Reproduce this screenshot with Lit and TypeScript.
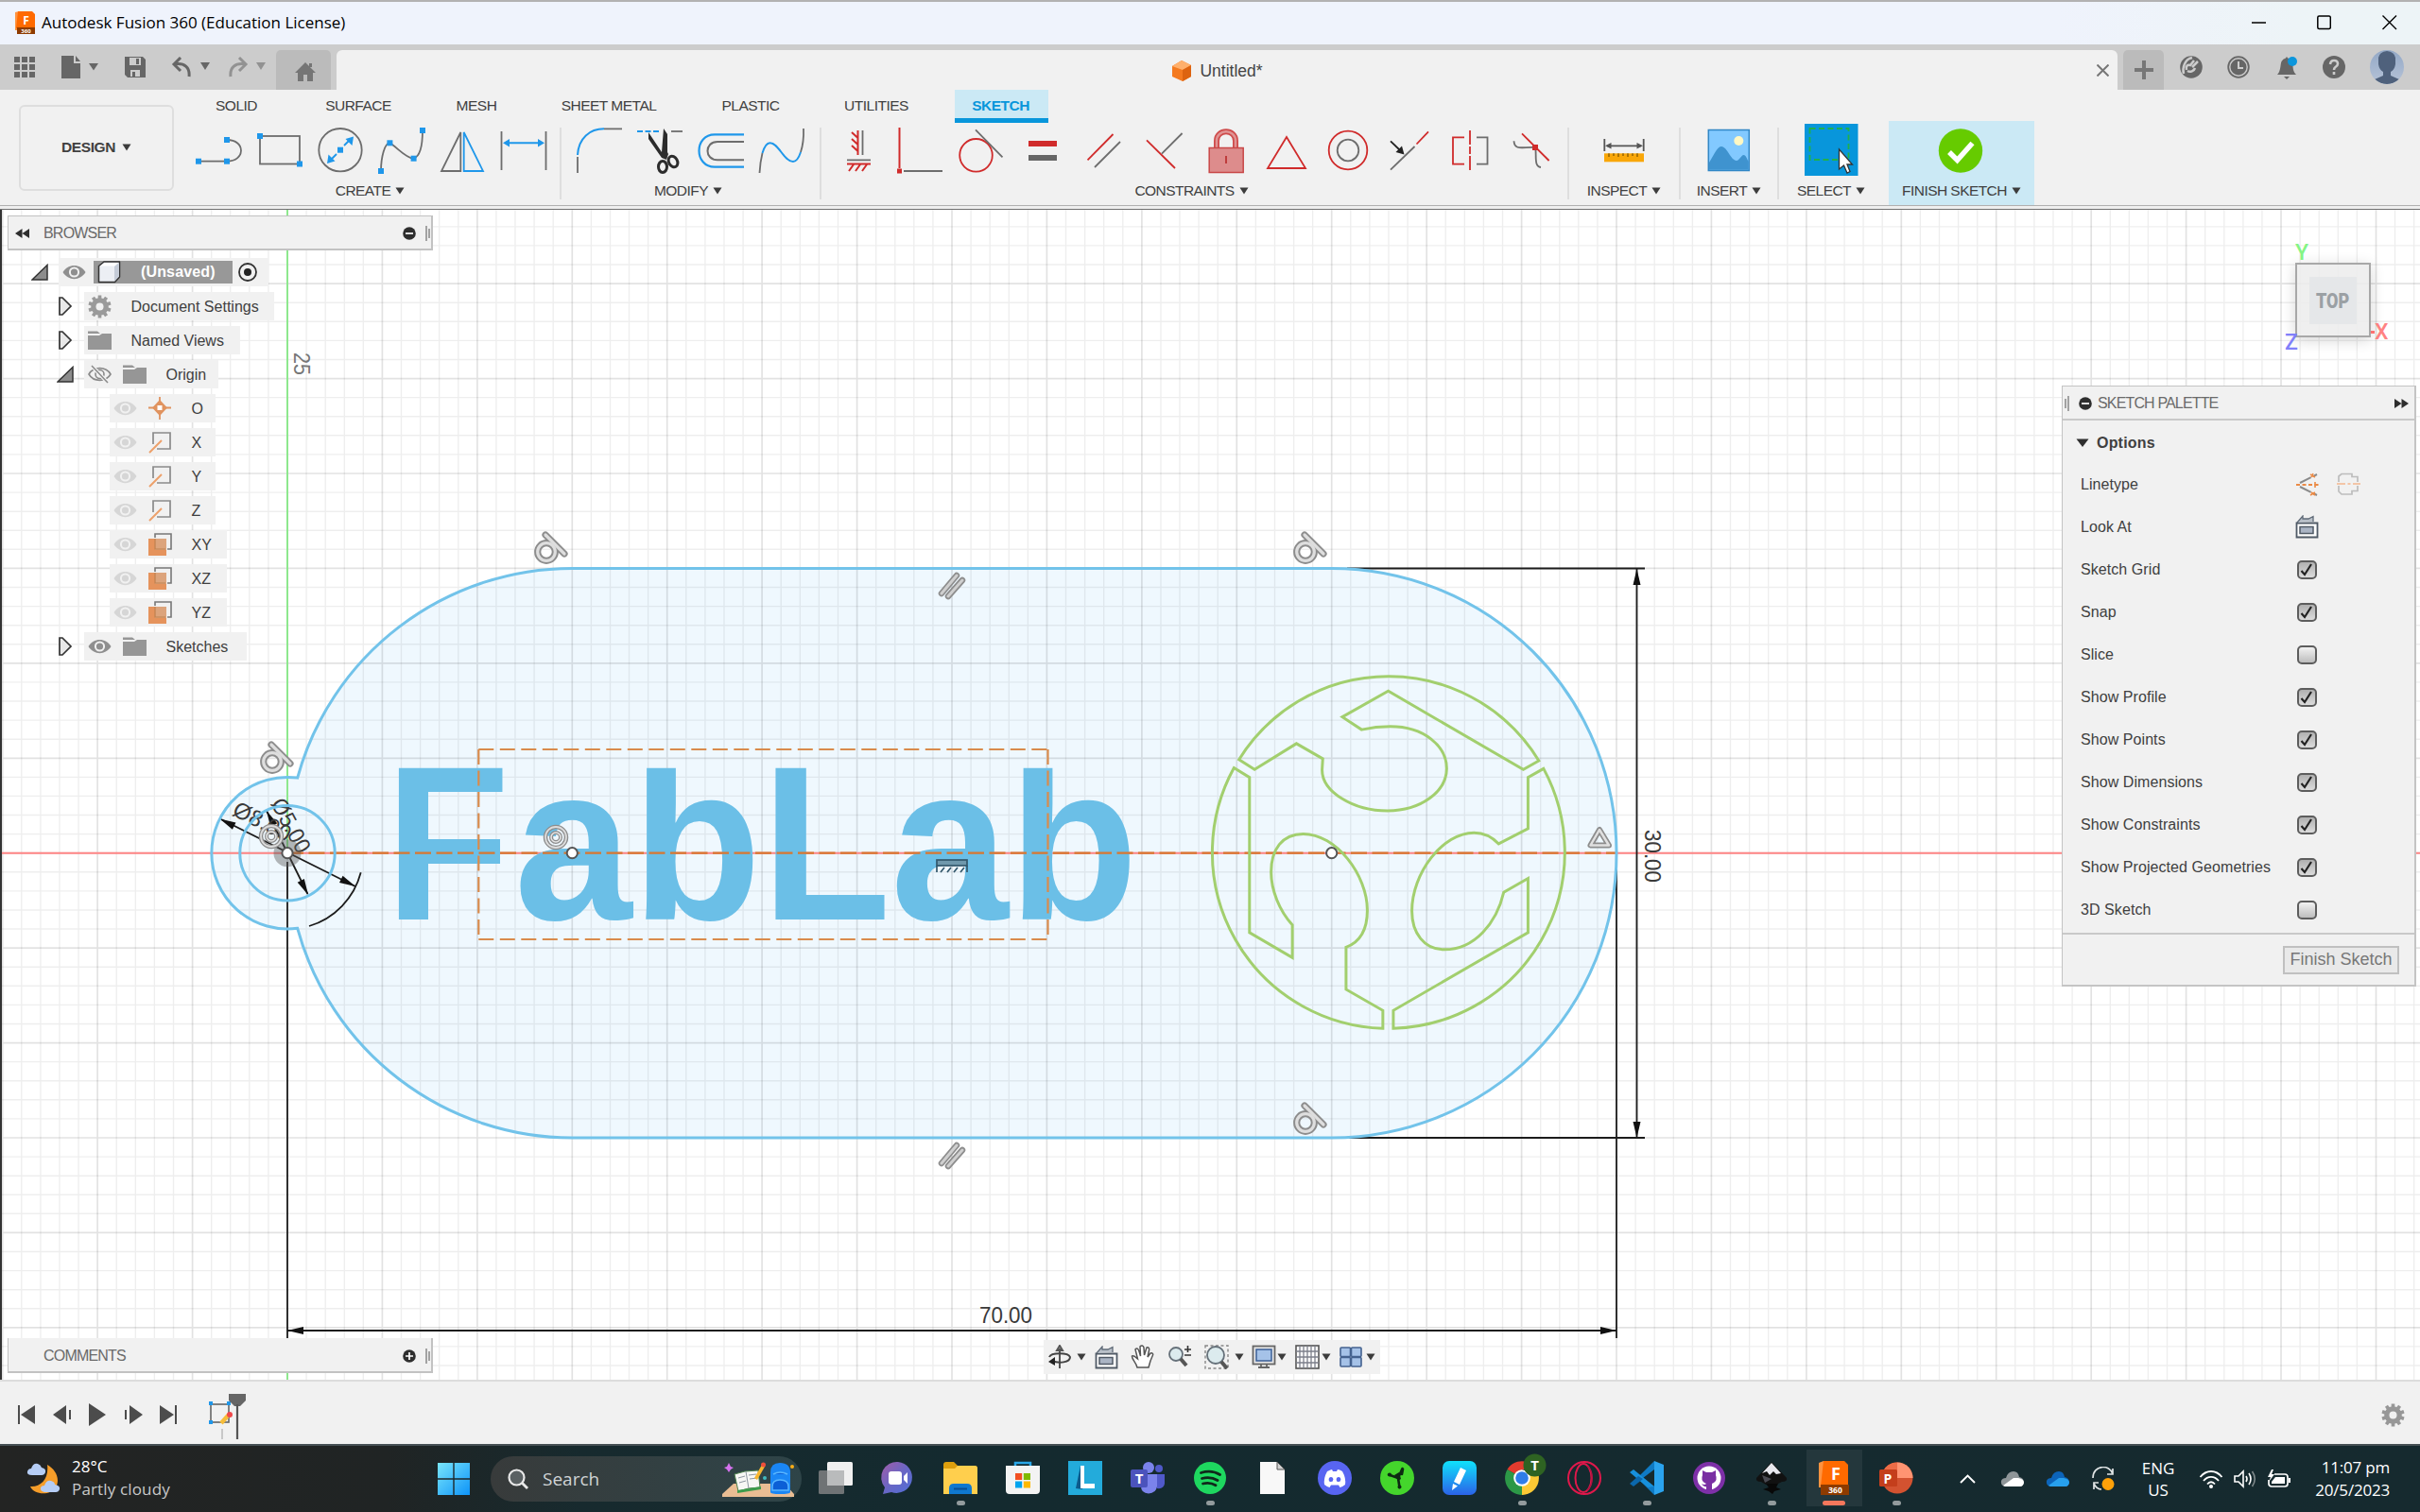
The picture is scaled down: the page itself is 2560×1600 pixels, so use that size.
import { LitElement, html, svg, css } from "lit";
import { customElement } from "lit/decorators.js";

/* ---------- helpers ---------- */

const RED = "#d02b2b";
const BLUE = "#1f97ea";
const GREY = "#6d6d6d";

const icon = (w: number, h: number, body: unknown, cls = "") =>
  html`<svg class="ic ${cls}" width=${w} height=${h} viewBox="0 0 ${w} ${h}" fill="none">${body}</svg>`;

/* tool icons share a 64x56 frame whose origin is the centre */
const tool = (body: unknown) =>
  html`<svg class="tool" width="64" height="56" viewBox="-32 -28 64 56" fill="none" stroke-width="1.8">${body}</svg>`;

const sq = (x: number, y: number, c = BLUE, s = 6) =>
  svg`<rect x=${x - s / 2} y=${y - s / 2} width=${s} height=${s} fill=${c} stroke="none"/>`;

const caret = (c = "#3c3c3c") => icon(10, 8, svg`<path d="M0.5 0.5H9.5L5 7.5Z" fill=${c}/>`);

const gearPath = (r: number) => {
  const out: string[] = [];
  const n = 10;
  for (let i = 0; i < n; i++) {
    const a = (i / n) * Math.PI * 2 - Math.PI / 2;
    const p = (rad: number, off: number) =>
      `${(Math.cos(a + off) * rad).toFixed(2)} ${(Math.sin(a + off) * rad).toFixed(2)}`;
    out.push(`${i ? "L" : "M"}${p(r * 0.76, -0.2)}L${p(r, -0.15)}L${p(r, 0.15)}L${p(r * 0.76, 0.2)}`);
  }
  return out.join("") + "Z";
};

const gear = (c: string) =>
  html`<svg class="ic" width="25" height="25" viewBox="-12.5 -12.5 25 25">
    <path d=${gearPath(12.2)} fill=${c} /><circle r="4" fill="#f1f1f1" />
  </svg>`;

/* ---------- ribbon tools ---------- */

const createTools = [
  svg`<g stroke=${GREY}><path d="M-21 12.7H9C29 12.7 29 -10 9 -10"/></g>${sq(-21, 12.7)}${sq(9, 12.7)}${sq(9, -10)}`,
  svg`<rect x="-21" y="-14" width="42" height="29.5" stroke=${GREY}/>${sq(-21, -14)}${sq(21, 15.5)}`,
  svg`<circle cy="0.7" r="22.7" stroke=${GREY}/><path d="M4 -4L10 -10M-4 5L-10 11" stroke=${BLUE}/>
    <path d="M14 -13.5L12.5 -4L5.5 -11ZM-14 15L-12.5 5.5L-5.5 12.5Z" fill=${BLUE}/>${sq(0, 0.7)}`,
  svg`<path d="M-22 23C-22 8 -18 -7 -12.6 -6.7C-6 -3 5 10 12.6 9.7C21 7 22 -8 22 -20" stroke=${GREY}/>
    ${sq(-22, 23)}${sq(-12.6, -6.7)}${sq(12.6, 9.7)}${sq(22, -20)}`,
  svg`<path d="M-1.7 -18L-22 23H-1.7Z" stroke=${GREY}/><path d="M1.7 -18L22 23H1.7Z" stroke=${BLUE}/>`,
  svg`<path d="M-23.5 -19V22M23.5 -19V22" stroke=${GREY}/><path d="M-19 -6.7H19" stroke=${BLUE} stroke-width="2"/>
    <path d="M-22 -6.7L-15 -11V-2.4ZM22 -6.7L15 -11V-2.4Z" fill=${BLUE}/>`,
];

const modifyTools = [
  svg`<path d="M-23 6C-22 -12 -10 -21.7 5 -21.7" stroke=${BLUE} stroke-width="2"/><path d="M5 -21.7H24M-23 8V25" stroke=${GREY}/>`,
  svg`<path d="M-24 -19H-1" stroke=${BLUE} stroke-dasharray="6 2.5" stroke-width="2"/><path d="M12 -19H24" stroke=${GREY}/>
    <path d="M-12 -18L-12 -11L2 9L7 11L9 5L8 3L8 -16L4 -22L2 3Z" fill="#2c2c2c"/>
    <ellipse cx="3" cy="18.5" rx="4.5" ry="6" stroke="#2c2c2c" stroke-width="3"/>
    <ellipse cx="14" cy="13" rx="4.5" ry="6" stroke="#2c2c2c" stroke-width="3" transform="rotate(-30 14 13)"/>`,
  svg`<path d="M24 -15.7H-7C-29 -15.7 -29 18.7 -7 18.7H24" stroke=${BLUE} stroke-width="2.2"/>
    <path d="M24 -8H-4C-18 -8 -18 11.3 -4 11.3H24" stroke=${GREY} stroke-width="2"/>`,
  svg`<path d="M-23.5 25C-23 16 -22 10 -20.5 4M20 3C23 -6 23.3 -14 23 -22" stroke=${GREY}/>
    <path d="M-20.5 4C-18 -4 -16 -6.7 -12.6 -6.7C-3 -6.7 2 13 12 13C16 13 18 9 20 3" stroke=${BLUE} stroke-width="2"/>`,
];

const constraintTools = [
  svg`<path d="M-1.5 -20V6M-8 -18L-1.5 -12M-8 -11L-1.5 -5M-8 -4L-1.5 2M-13 15.5H12M-11 23L-6 16M-4 23L1 16M3 23L8 16" stroke=${RED} stroke-width="2"/>
    <path d="M3.5 -20V6M-13 11.3H12" stroke=${GREY}/>`,
  svg`<path d="M-22.5 -23V20" stroke=${RED} stroke-width="2"/><path d="M-18 23H23" stroke=${GREY} stroke-width="2"/>${sq(-22.5, 23, RED, 5)}`,
  svg`<circle cx="-5.5" cy="6.3" r="17.3" stroke=${RED}/><path d="M-6 -20.7L22.5 8.3" stroke=${GREY}/>`,
  svg`<rect x="-15" y="-9" width="30" height="6" fill=${RED}/><rect x="-15" y="6" width="30" height="6" fill="#666"/>`,
  svg`<path d="M9.5 -16L-17.5 11.3" stroke=${RED}/><path d="M17 -8L-10 19" stroke=${GREY}/>`,
  svg`<path d="M-19 -9.7L11 20" stroke=${RED}/><path d="M18.6 -17L-3 4.7" stroke=${GREY}/>`,
  svg`<path d="M-10 -1V-9C-10 -22 10 -22 10 -9V-1" stroke="#cf4b4b" stroke-width="6"/>
    <path d="M-10 -1V-9C-10 -22 10 -22 10 -9V-1" stroke="#e09494" stroke-width="2.5"/>
    <rect x="-17.8" y="-1.5" width="36" height="26" fill="#dd8c8c" stroke="#c94848" stroke-width="1.5"/><path d="M0 7V15" stroke="#b33"/>`,
  svg`<path d="M0 -13L-20 20H20Z" stroke=${RED}/>`,
  svg`<circle cy="1" r="20.3" stroke=${RED}/><circle cy="1" r="11.3" stroke=${GREY}/>`,
  svg`<path d="M-20 21.7L5.5 -3" stroke=${GREY}/><path d="M7.5 -5.5L20 -18.7" stroke=${RED}/>
    <path d="M-20 -8.7L-10 1" stroke="#222"/><path d="M-5.5 5.5L-8 -3.5L-14.5 3Z" fill="#222"/>`,
  svg`<path d="M-6 -12.7H-18V15.7H-6M0 -20V-5M0 -3V5M0 7V22" stroke=${RED}/><path d="M7 -12.7H18.5V15.7H7" stroke=${GREY}/>`,
  svg`<path d="M-18.5 -8.7C-18 2 -8 -3 4 -2C6 5 2 18 10 19" stroke=${GREY}/><path d="M-10 -16.7L18.6 12" stroke=${RED}/>${sq(4, -2, RED, 6)}`,
];

const inspectTool = svg`<path d="M-20.7 -11V2M20.7 -11V2M-18 -3.7H18" stroke="#555"/>
  <path d="M-20 -3.7L-13.5 -7V-0.4ZM20 -3.7L13.5 -7V-0.4Z" fill="#555"/>
  <rect x="-21" y="4.3" width="42" height="9" fill="#f9a709"/>
  <path d="M-16 4.3V8M-11 4.3V7M-6 4.3V8M-1 4.3V7M4 4.3V8M9 4.3V7M14 4.3V8" stroke="#7a5200" stroke-width="1.2"/>`;
const insertTool = svg`<rect x="-21.7" y="-20.5" width="43" height="43" fill="#82c9ff" stroke="#3187c6" stroke-width="1.5"/>
  <path d="M-21 14C-15 4 -12 -3 -8 -3C-2 -3 2 12 8 12C11 12 13 6 15.500 6C18 6 19 10 20.6 13V21.800H-21Z" fill="#3f93cf"/>
  <circle cx="10.300" cy="-9" r="5" fill="#fff8c4"/>`;
const selectTool = svg`<rect x="-28" y="-27" width="56.500" height="57" fill="#0896db"/>
  <rect x="-22.500" y="-22" width="41" height="33" stroke="#21b04b" stroke-dasharray="6 3.500"/>
  <path d="M8.500 0V21L13.500 17L17 25L20 23.500L17 16H22.500Z" fill="#fff" stroke="#333" stroke-width="1.300"/>`;
const finishTool = svg`<circle cx="-1" cy="1.500" r="23.200" fill="#66cb00"/><path d="M-13 3L-4.500 11.500L11.500 -6.500" stroke="#fff" stroke-width="5.500"/>`;

/* ---------- sketch canvas ---------- */

const OX = 304, OY = 902.7, MM = 20.086;
const mx = (v: number) => OX + v * MM;
const my = (v: number) => OY - v * MM;

const gridLines = () => {
  let minor = "", major = "";
  for (let i = -15; i <= 112; i++) {
    const s = `M${mx(i).toFixed(1)} 222V1460`;
    if (i % 5 === 0) major += s; else minor += s;
  }
  for (let i = -27; i <= 33; i++) {
    const s = `M0 ${my(i).toFixed(1)}H2560`;
    if (i % 5 === 0) major += s; else minor += s;
  }
  return svg`<path d=${minor} stroke="#000" stroke-opacity=".068" stroke-width="1.4"/>
    <path d=${major} stroke="#000" stroke-opacity=".115" stroke-width="1.7"/>`;
};

const arrow = (x: number, y: number, deg: number) =>
  svg`<path d="M0 0L-17 -4V4Z" fill="#111" transform="translate(${x} ${y}) rotate(${deg})"/>`;

const tangent = (x: number, y: number) => svg`<g transform="translate(${x} ${y})" fill="none">
  <g stroke="#8d8d8d" stroke-width="7.200" stroke-linecap="round"><circle cx="-4" cy="4" r="9.300"/><path d="M-5 -14L15 6"/></g>
  <g stroke="#dedede" stroke-width="3.200" stroke-linecap="round"><circle cx="-4" cy="4" r="9.300"/><path d="M-5 -14L15 6"/></g></g>`;

const parallelMark = (x: number, y: number) => svg`<g transform="translate(${x} ${y})" stroke-linecap="round">
  <path d="M-11 8L5 -11M-4 11L11 -6" stroke="#8d8d8d" stroke-width="6.500"/>
  <path d="M-11 8L5 -11M-4 11L11 -6" stroke="#cfcfcf" stroke-width="3"/></g>`;

const concentric = (x: number, y: number) => svg`<g transform="translate(${x} ${y})" fill="none">
  <circle r="11" stroke="#8d8d8d" stroke-width="4.500"/><circle r="11" stroke="#dcdcdc" stroke-width="1.800"/>
  <circle r="5" stroke="#8d8d8d" stroke-width="4"/><circle r="5" stroke="#e6e6e6" stroke-width="1.500"/></g>`;

const point = (x: number, y: number) => svg`<circle cx=${x} cy=${y} r="5.600" fill="#fff" stroke="#555" stroke-width="2"/>`;

const R = 15 * MM;
const outline = `M314.700 ${OY - 79.6}A${R} ${R} 0 0 1 ${mx(15)} ${my(15)}H${mx(55)}A${R} ${R} 0 0 1 ${mx(55)} ${my(-15)}H${mx(15)}A${R} ${R} 0 0 1 314.700 ${OY + 79.6}A80.300 80.300 0 1 1 314.700 ${OY - 79.6}Z`;

const drawing = () => html`<svg class="drawing" width="2560" height="1238" viewBox="0 222 2560 1238">
  <defs><clipPath id="cap"><rect x="400" y="812.700" width="820" height="200" /></clipPath></defs>
  <path d=${outline} fill="#eff8fe" />
  ${gridLines()}
  <path d="M0 ${OY}H2560" stroke="#ff8585" stroke-width="2" />
  <path d="M${OX} 222V${OY}M${OX} 1453V1460" stroke="#8ee88e" stroke-width="2" />
  <path d="M1 222V1460" stroke="#333" stroke-width="2" />
  <text class="axis" transform="translate(311 373) rotate(90)" textLength="24" lengthAdjust="spacingAndGlyphs">25</text>
  <g class="dim">
    <path d="M1425 601.500H1740M1425 1204H1740M1731.500 602V1204M${OX} 912V1416M1710 903V1416M${OX} 1408H1710" />
    <path d="M234 867L376 938M282 858L325.500 946M381.700 923.300A80.300 80.300 0 0 1 327 980" />
  </g>
  ${arrow(1731.5, 602, -90)}${arrow(1731.5, 1204, 90)}${arrow(OX, 1408, 180)}${arrow(1710, 1408, 0)}
  ${arrow(232.5, 866.5, 206.6)}${arrow(376, 938, 26.6)}${arrow(282, 858, 243)}${arrow(326, 947, 63)}
  <text class="dimtext" transform="translate(1740 878) rotate(90)" textLength="56" lengthAdjust="spacingAndGlyphs">30.00</text>
  <text class="dimtext" x="1036" y="1400" textLength="56" lengthAdjust="spacingAndGlyphs">70.00</text>
  <text class="dimtext" transform="translate(244.500 862) rotate(26.600)">Ø8.00</text>
  <text class="dimtext" transform="translate(286 850) rotate(62)" textLength="62" lengthAdjust="spacingAndGlyphs">Ø5.00</text>
  <g clip-path="url(#cap)">
    <text class="fab" transform="translate(407.500 973.300) scale(.925 1)">F</text>
    <text class="fab" transform="translate(544 973.300) scale(.96 1)">abLab</text>
  </g>
  <g fill="none" stroke="#d98b4c" stroke-width="2.200">
    <path d="M506.300 793H1108.500M506.300 994H1108.500M506.300 793V994M1108.500 793V994" stroke-dasharray="16 6.500" />
    <path d="M${OX} ${OY}H1710" stroke="#d87730" stroke-dasharray="17 5.500" />
  </g>
  <g fill="none" stroke="#72c3ea" stroke-width="3">
    <path d=${outline} /><circle cx=${OX} cy=${OY} r="50.200" />
  </g>
  <g fill="none" stroke="#a2cf6e" stroke-width="3">
    <g transform="translate(1260 560) scale(.357143 .420875)">
      <path vector-effect="non-scaling-stroke" d="M142 579A521.500 442.500 0 0 1 1030 582L984 604L584 407L448 472L505 504C532 499 560 496 590 496C690 496 757 545 757 602C757 660 680 708 582 708C480 708 388 660 388 605L390 577L312 539L188 604Z" />
      <path vector-effect="non-scaling-stroke" d="M127 600L173 624V1014L300 1077V995C262 960 237 908 237 862C237 805 270 766 332 766C430 766 522 870 522 958C522 1005 500 1038 459 1051V1157L568 1210V1255A521.500 442.500 0 0 1 127 600Z" />
      <path vector-effect="non-scaling-stroke" d="M1044 602A521.500 442.500 0 0 1 599 1255V1210L998 1014V878L926 913C905 990 840 1057 750 1057C690 1057 654 1015 654 960C654 865 745 763 838 763C865 763 890 772 911 791L998 753V624Z" />
    </g>
  </g>
  <circle cx=${OX} cy=${OY} r="14.500" fill="#555" fill-opacity=".42" />
  ${concentric(287, 885)}${concentric(588, 886)}
  ${tangent(582, 580)}${tangent(1385, 580)}${tangent(292, 802)}${tangent(1385, 1184)}
  ${parallelMark(1007, 620)}${parallelMark(1007, 1223)}
  <g transform="translate(1007 916)" stroke="#33586c" fill="none" stroke-width="1.700">
    <rect x="-16" y="-6" width="32" height="6" fill="#6f98ac" /><path d="M-16 0V7M16 0V7M-12 7L-8 2M-5 7L-1 2M2 7L6 2M9 7L13 2" />
  </g>
  <g fill="none" stroke-linejoin="round"><path d="M1692 878L1682.500 894.500H1702Z" stroke="#8d8d8d" stroke-width="6" /><path d="M1692 878L1682.500 894.500H1702Z" stroke="#e0e0e0" stroke-width="2.500" /></g>
  ${point(OX, OY)}${point(605.3, OY)}${point(1408.7, OY)}
</svg>`;

/* ---------- browser tree ---------- */

const eye = (c: string) => icon(25, 16, svg`<path d="M0.500 8C6 -1.500 19 -1.500 24.500 8C19 17.500 6 17.500 0.500 8Z" fill=${c}/><circle cx="12.500" cy="8" r="4.600" stroke="#f1f1f1" stroke-width="2"/>`);
const eyeOff = icon(25, 20, svg`<path d="M1 10C6 1.500 19 1.500 24 10C19 18.500 6 18.500 1 10Z" stroke="#8a8a8a" stroke-width="1.600"/><circle cx="12.500" cy="10" r="4.500" stroke="#8a8a8a" stroke-width="1.600"/><path d="M4 1L21 19" stroke="#f1f1f1" stroke-width="4"/><path d="M4 1L21 19" stroke="#8a8a8a" stroke-width="1.500"/>`);
const folder = icon(25, 20, svg`<path d="M0 0.500H10L13 3H0ZM0 5H12L15 3H25V20H0Z" fill="#969696"/>`);
const cube = icon(25, 24, svg`<path d="M1.500 5.500L7 1H23.500V17L18.500 22.500H1.500Z" fill="#eceff4" stroke="#333" stroke-width="1.500" stroke-linejoin="round"/><path d="M18 6L23 2V16.500L18 21.500Z" fill="#c5ccd8"/><path d="M3 5.500L8 2H22L18 5.500Z" fill="#fff"/>`);
const originPt = icon(25, 24, svg`<path d="M12 0V24M0 11.500H24" stroke="#e0935f" stroke-width="1.800"/><path d="M12 3L20 11.500L12 20L4 11.500Z" fill="#e0935f"/><rect x="9.500" y="9" width="5" height="5" fill="#fff"/>`);
const axisIc = icon(25, 24, svg`<path d="M5 14V2H23V19H9" stroke="#8a8a8a" stroke-width="1.700"/><path d="M1 23L14 10" stroke="#eda06a" stroke-width="2"/>`);
const planeIc = icon(25, 24, svg`<rect x="0" y="6" width="19" height="18" fill="#e5935c"/><rect x="7" y="6" width="12" height="12" fill="#dca47c"/><path d="M7 5V1H24V17H20" stroke="#777" stroke-width="1.600"/><path d="M7 6V17H18" stroke="#c0814f" stroke-width="1.200"/>`);
const openArrow = icon(18, 18, svg`<path d="M1 17H17V1.500Z" fill="#8c8c8c" stroke="#333" stroke-width="1.500"/>`);
const shutArrow = icon(17, 20, svg`<path d="M3 1H6L15 10L6 19H3Z" fill="#e8e8e8" stroke="#333" stroke-width="1.700"/>`);

type Row = { lvl: number; arrow?: unknown; icons: unknown[]; label: string; w: number };
const faint = eye("#d6d6d6"), solid = eye("#8f8f8f");
const rows: Row[] = [
  { lvl: 1, arrow: shutArrow, icons: [gear("#9a9a9a")], label: "Document Settings", w: 201 },
  { lvl: 1, arrow: shutArrow, icons: [folder], label: "Named Views", w: 165 },
  { lvl: 1, arrow: openArrow, icons: [eyeOff, folder], label: "Origin", w: 142 },
  { lvl: 2, icons: [faint, originPt], label: "O", w: 112 },
  { lvl: 2, icons: [faint, axisIc], label: "X", w: 112 },
  { lvl: 2, icons: [faint, axisIc], label: "Y", w: 112 },
  { lvl: 2, icons: [faint, axisIc], label: "Z", w: 112 },
  { lvl: 2, icons: [faint, planeIc], label: "XY", w: 124 },
  { lvl: 2, icons: [faint, planeIc], label: "XZ", w: 124 },
  { lvl: 2, icons: [faint, planeIc], label: "YZ", w: 124 },
  { lvl: 1, arrow: shutArrow, icons: [solid, folder], label: "Sketches", w: 172 },
];

const roundBtn = (plus: boolean) => icon(14, 14, svg`<circle cx="7" cy="7" r="6.800" fill="#2e2e2e"/><path d=${plus ? "M3 7H11M7 3V11" : "M3 7H11"} stroke="#fff" stroke-width="1.700"/>`);
const grip = icon(5, 16, svg`<path d="M1 0V16M4 3V13" stroke="#888" stroke-width="1.500"/>`);
const gripR = icon(5, 16, svg`<path d="M1 3V13M4 0V16" stroke="#888" stroke-width="1.500"/>`);

/* ---------- palette ---------- */

const lookAt = icon(25, 25, svg`<path d="M1.500 8.500H23.500V23.500H1.500Z" fill="#fff" stroke="#505a66" stroke-width="1.800"/><rect x="5" y="12.500" width="14" height="7" fill="#aab4c4" stroke="#505a66" stroke-width="1.500"/><path d="M2 8L8 1V4L14 4L19 1.500V7" fill="#b9c0c9" stroke="#606b78" stroke-width="1.300"/>`);
const linetype = html`<span class="pair">${icon(25, 25, svg`<path d="M5 11L23 2M5 15L23 24" stroke="#8a8a8a" stroke-width="2" stroke-dasharray="13 3"/><path d="M1 13H25" stroke="#eb8a45" stroke-width="2" stroke-dasharray="4 2.500"/><path d="M16 2L21 5M21 10V16M16 24L21 21M17 5L19 1M17 21L21 24" stroke="#eb8a45" stroke-width="1.600"/>`)}
${icon(25, 25, svg`<path d="M2 10V4L5 1.500H16V4.500H22V10M2 14V20L5 23H16V19.500H22V14" stroke="#bdbdbd" stroke-width="1.700"/><path d="M0 12H25" stroke="#f3b78f" stroke-width="1.700" stroke-dasharray="9 2.500 3 2.500"/>`)}</span>`;
const check = (on: boolean) => html`<span class="check ${on ? "on" : ""}">${on ? icon(20, 20, svg`<path d="M4.500 11L8 15L15 4" stroke="#222" stroke-width="2.200"/>`) : ""}</span>`;

const options: [string, unknown][] = [
  ["Linetype", linetype], ["Look At", lookAt], ["Sketch Grid", check(true)], ["Snap", check(true)],
  ["Slice", check(false)], ["Show Profile", check(true)], ["Show Points", check(true)],
  ["Show Dimensions", check(true)], ["Show Constraints", check(true)],
  ["Show Projected Geometries", check(true)], ["3D Sketch", check(false)],
];

/* ---------- navigation bar ---------- */

const lens = (body: unknown) => icon(26, 26, body);
/* lead: space before the item; gap: space between its icon and its caret */
const navItems: { lead: number; gap?: number; body: unknown }[] = [
  { lead: 0, gap: 5, body: lens(svg`<path d="M13 25V4M10 6L13 1L16 6Z" stroke="#555" stroke-width="2" fill="#ddd"/><path d="M2 13C4 8 22 8 24 13C24 19 12 20 5 17" stroke="#444" stroke-width="2"/><path d="M1 18L8 13V22Z" fill="#222"/>`) },
  { lead: 8.5, body: lookAt },
  { lead: 13.5, body: lens(svg`<path d="M7 24C6 19 1 15 1.500 12C4 11 6 14 7.500 15L5 5C6.500 3 8 4 9 7L10.500 12L10 2C11.500 0 13.500 1 14 3L14.500 11L17 3C19 2 20 4 19.500 6L18 13L21 9C23 8 24 10 23.500 11C21 16 20 20 19 24Z" fill="#fff" stroke="#555" stroke-width="1.500"/>`) },
  { lead: 13, body: lens(svg`<circle cx="9" cy="10" r="7" fill="#dcebee" stroke="#66717a" stroke-width="1.800"/><path d="M14 15L20 22" stroke="#555" stroke-width="4"/><path d="M18 5H25M21.500 1V8M18 11H25" stroke="#333" stroke-width="1.600"/>`) },
  { lead: 13, gap: 6, body: lens(svg`<rect x="1" y="1" width="24" height="24" stroke="#888" stroke-width="1.400" stroke-dasharray="3 2.500"/><circle cx="12" cy="11" r="9" fill="#dcebee" stroke="#66717a" stroke-width="1.800"/><path d="M18 18L24 25" stroke="#555" stroke-width="4"/>`) },
  { lead: 8, gap: 1, body: lens(svg`<rect x="1.500" y="1.500" width="23" height="19" fill="#e6e6e6" stroke="#666" stroke-width="1.800"/><rect x="5" y="5" width="16" height="12" fill="#a5c2e8" stroke="#3b5f96" stroke-width="1.500"/><path d="M10 20V24H7H19H16V20" stroke="#666" stroke-width="1.800"/>`) },
  { lead: 9, gap: 2, body: lens(svg`<rect x="1" y="1" width="24" height="24" fill="#fff" stroke="#555" stroke-width="1.600"/><path d="M1 7H25M1 13H25M1 19H25M5 1V25M9 1V25M13 1V25M17 1V25M21 1V25" stroke="#7c7f8a" stroke-width="1.300"/>`) },
  { lead: 8, gap: 3, body: lens(svg`<g fill="#a5c2e8" stroke="#44628f" stroke-width="1.600"><rect x="2" y="3" width="10.500" height="9.500" rx="1"/><rect x="13.500" y="3" width="10.500" height="9.500" rx="1"/><rect x="2" y="13.500" width="10.500" height="9.500" rx="1"/><rect x="13.500" y="13.500" width="10.500" height="9.500" rx="1"/></g>`) },
];

/* ---------- task bar ---------- */

const app = (body: unknown) => html`<svg class="ic" width="38" height="38" viewBox="0 0 38 38" fill="none">${body}</svg>`;
const apps: { body: unknown; mark?: string }[] = [
  { body: app(svg`<rect x="1" y="11" width="27" height="25" rx="1.500" fill="#6f7375"/><rect x="10" y="2" width="27" height="25" rx="1.500" fill="#f0f0f0"/><rect x="10" y="11" width="18" height="16" fill="#b9bbbc"/>`) },
  { body: app(svg`<defs><linearGradient id="vc" x1="0" y1="0" x2="1" y2="1"><stop offset="0" stop-color="#a25ca8"/><stop offset=".5" stop-color="#6a66c4"/><stop offset="1" stop-color="#4e6fd8"/></linearGradient></defs><path d="M19 2A16.500 16.500 0 1 1 12 34L3 36L5 29A16.500 16.500 0 0 1 19 2Z" fill="url(#vc)"/><rect x="9" y="12" width="14" height="14" rx="3" fill="#fff"/><path d="M25 17L29 13V25L25 21Z" fill="#fff"/>`) },
  { body: app(svg`<path d="M1 5Q1 2 4 2H12L16 6H34Q37 6 37 9V16H1Z" fill="#dd9f0d"/><path d="M1 9H13L16 6H34Q37 6 37 9V36H1Z" fill="#ffcf4d"/><path d="M7 36V30Q7 25 12 25H26Q31 25 31 30V36Z" fill="#0f78cf"/><path d="M12 30.500H26" stroke="#0a4f93" stroke-width="2"/>`), mark: "dot" },
  { body: app(svg`<path d="M11 8V3H27V8" stroke="#2aa7e8" stroke-width="2.500"/><path d="M1 6H37V32Q37 36 33 36H5Q1 36 1 32Z" fill="#f3f3f3"/><path d="M11 14H18.200V21H11Z" fill="#f25022"/><path d="M19.800 14H27V21H19.800Z" fill="#7fba00"/><path d="M11 22.500H18.200V29.500H11Z" fill="#00a4ef"/><path d="M19.800 22.500H27V29.500H19.800Z" fill="#ffb900"/>`) },
  { body: app(svg`<rect x="1" y="1" width="36" height="36" fill="#23abdb"/><path d="M9 30L14 6V26H17L16 31Z" fill="#0c5a8c"/><path d="M14 6H18V25H29V30H14Z" fill="#fff"/>`) },
  { body: app(svg`<circle cx="20" cy="8" r="6" fill="#7b83eb"/><circle cx="31" cy="9" r="4" fill="#5059c9"/><path d="M26 15H37V25Q36 31 29 30Z" fill="#5059c9"/><path d="M12 15H29V28Q28 35 20 35.500Q12 35 12 28Z" fill="#7b83eb"/><rect x="1" y="10" width="18" height="19" rx="2" fill="#4b53bc"/><text class="glyph" x="10" y="25" text-anchor="middle" font-size="15">T</text>`) },
  { body: app(svg`<circle cx="19" cy="19" r="17" fill="#1ed75f"/><path d="M9.500 13.500C16 11.500 24 12 29.500 15.500M10.500 19.500C16 18 22 18.500 27 21.500M11.500 25C16 23.800 21 24.300 25 26.700" stroke="#10281b" stroke-width="2.800" stroke-linecap="round"/>`), mark: "dot" },
  { body: app(svg`<path d="M6 2H24L32 10V36H6Z" fill="#f8f8f8"/><path d="M24 2V10H32Z" fill="#d2d2d2" stroke="#555" stroke-width="1"/>`) },
  { body: app(svg`<circle cx="19" cy="19" r="18" fill="#5865f2"/><path d="M11 12Q15 10 16 10L17 12H21L22 10Q24 10 27 12Q31 19 30 26Q27 28.500 24.500 29L23 26.500H15L13.500 29Q11 28.500 8 26Q7 19 11 12Z" fill="#fff"/><ellipse cx="15" cy="20.500" rx="2.300" ry="2.600" fill="#5865f2"/><ellipse cx="23" cy="20.500" rx="2.300" ry="2.600" fill="#5865f2"/>`) },
  { body: app(svg`<circle cx="19" cy="19" r="18" fill="#44d62c"/><path d="M20 19L24.500 9M20 19L10 15.500M20 19L21.500 29M25 9.500L24 15" stroke="#0d2a12" stroke-width="2.600" stroke-linecap="round" stroke-linejoin="round"/><path d="M16 16L21 13L23 20L20 22Z" fill="#0d2a12"/><circle cx="11" cy="15.500" r="2" fill="#0d2a12"/><circle cx="21.500" cy="28.500" r="2" fill="#0d2a12"/>`) },
  { body: app(svg`<defs><linearGradient id="pn" x1="0" y1="0" x2="0" y2="1"><stop offset="0" stop-color="#10e2fb"/><stop offset="1" stop-color="#2b62e8"/></linearGradient></defs><rect x="1" y="1" width="36" height="36" rx="7" fill="url(#pn)"/><path d="M20 8L26 11L19 26L13 23Z" fill="#fff"/><path d="M12 25L17 27.500L11 32Z" fill="#fff"/>`) },
  { body: app(svg`<path d="M19 19L3.500 10A18 18 0 0 1 34.500 10H19Z" fill="#e33b2e"/><path d="M19 19L34.500 10A18 18 0 0 1 19 37Z" fill="#fcc934"/><path d="M19 19L19 37A18 18 0 0 1 3.500 10Z" fill="#2c9847"/><circle cx="19" cy="19" r="8.800" fill="#fff"/><circle cx="19" cy="19" r="6.800" fill="#2f7de9"/><circle class="badge" cx="32.500" cy="5.500" r="12" fill="#2e6322"/><text class="glyph" x="32.500" y="11" text-anchor="middle" font-size="15" fill="#d9e8d2">T</text>`), mark: "dot" },
  { body: app(svg`<circle cx="19" cy="19" r="17" stroke="#e0184b" stroke-width="2"/><ellipse cx="18" cy="19" rx="8.500" ry="15" stroke="#e0184b" stroke-width="2"/><path d="M22 6C29 12 29 26 22 32" stroke="#b01340" stroke-width="1.500"/>`) },
  { body: app(svg`<path d="M27 1L37 5V33L27 37Z" fill="#2aa3ee"/><path d="M27 1L9 19L27 37V28L15 19L27 10Z" fill="#0f7ac4"/><path d="M5 10L1 13L20 29L27 28Z" fill="#1790dc"/><path d="M5 28L1 25L10 17L15 20Z" fill="#0b67ab"/>`), mark: "dot" },
  { body: app(svg`<circle cx="19" cy="19" r="17" fill="#7e30a8"/><circle cx="19" cy="19" r="12.500" fill="#fff"/><path d="M12 11L16 13H22L26 11V16Q28 21 24 24L22 25V32H16V28Q13 29 11 25Q14 27 16 25L14 24Q10 21 12 16Z" fill="#7a2fa3"/>`) },
  { body: app(svg`<path d="M19 2L35 19Q36 23 30 23L24 26H13L8 23Q2 23 3 19Z" fill="#111"/><path d="M19 3L29 14L24 15L21 12L17 16L14 12L9 14Z" fill="#e8e8ee"/><path d="M9 16L19 20L12 24Z" fill="#4a4a52"/><path d="M13 25H26L24 29L29 31L22 33L20 36L16 33L10 31L16 29Z" fill="#080808"/>`), mark: "dot" },
  { body: app(svg`<path d="M3 3L8 1V29H3Z" fill="#ff9340"/><path d="M8 1H30L34 5V28H5Z" fill="#ff6a00"/><path d="M5 26H35V37H5Z" fill="#8e3b00"/><text class="glyph" x="21" y="21" text-anchor="middle" font-size="18">F</text><text class="glyph" x="20.500" y="35" text-anchor="middle" font-size="8.500">360</text>`), mark: "bar" },
  { body: app(svg`<circle cx="20" cy="19" r="16.500" fill="#d35230"/><path d="M20 2.500A16.500 16.500 0 0 1 36.500 19H20Z" fill="#ff9472"/><path d="M20 2.500A16.500 16.500 0 0 0 5 12V19H20Z" fill="#ed6c47"/><rect x="1" y="10" width="19" height="18" rx="1.500" fill="#c43e1c"/><text class="glyph" x="10" y="24.500" text-anchor="middle" font-size="14">P</text>`), mark: "dot" },
];

const cloud = (a: string, b: string) => icon(26, 18, svg`<path d="M5 17Q0 16 1 11Q2 8 6 8Q8 1 14 1Q19 1 20 7Q25 8 25 13Q24 17 21 17Z" fill=${a}/><path d="M3 16L14 8L19 8Q25 9 25 13Q24 17 21 17H5Z" fill=${b}/>`);

@customElement("app-root")
export class AppRoot extends LitElement {
  static styles = css`
    :host { display: block; width: 2560px; height: 1600px; overflow: hidden; font-family: "Liberation Sans", Arial, sans-serif; color: #404040; background: #f1f1f1; }
    * { box-sizing: border-box; }
    svg { display: block; flex: none; }
    .window { display: flex; flex-direction: column; height: 1600px; }
    .titlebar { height: 47px; border-top: 2px solid #b2b2b2; background: linear-gradient(90deg, #eff3fc 0, #eff3fc 85%, #edf4f7 95%); display: flex; align-items: center; padding: 0 24px 2px 16px; font: 17px "Open Sans", "Noto Sans", sans-serif; color: #000; }
    .titlebar .name { margin-left: 7px; white-space: nowrap; }
    .winbtns { margin-left: auto; display: flex; gap: 54px; align-items: center; }

    .tabbar { height: 48px; background: #cccccc; display: flex; padding: 6px 14px 0 0; }
    .quick { width: 292px; display: flex; align-items: center; padding: 0 0 6px 15px; }
    .home { width: 58px; background: #bbb; border-radius: 5px 5px 0 0; display: flex; justify-content: center; align-items: center; padding: 4px 0 0 4px; }
    .doc { margin-left: 6px; width: 1884px; background: #f1f1f1; border-radius: 6px 6px 0 0; display: grid; grid-template-columns: 1fr auto 1fr; align-items: center; padding-right: 9px; font-size: 17.5px; color: #444; }
    .doc .mid { grid-column: 2; display: flex; gap: 8px; align-items: center; padding: 2px 12px 0 0; }
    .doc .x { justify-self: end; }
    .plus { margin-left: 6px; width: 43px; background: #bbb; border-radius: 5px 5px 0 0; display: flex; justify-content: center; align-items: center; }
    .account { flex: 1; display: flex; justify-content: space-between; align-items: center; padding: 0 3px 6px 17px; }

    .ribbon { height: 122px; background: #f1f1f1; display: flex; }
    .design { margin: 16px 9px 0 20px; width: 164px; height: 91px; border: 2px solid #dedede; border-radius: 6px; display: flex; align-items: center; justify-content: center; gap: 7px; font-weight: bold; font-size: 15.5px; letter-spacing: -.4px; padding-bottom: 2px; }
    .tabs { display: grid; grid-template-columns: 88px 170px 80px 200px 100px 166px 99px; margin-left: 13px; height: 35px; font-size: 15.5px; letter-spacing: -.5px; }
    .tabs span { display: flex; align-items: center; justify-content: center; white-space: nowrap; padding-bottom: 2px; }
    .tabs .sel { background: #cbe9f5; border-bottom: 5px solid #0896db; color: #0896db; font-weight: bold; padding: 3px 2px 0 0; }
    .groups { display: flex; height: 87px; }
    .group { display: flex; flex-direction: column; align-items: center; }
    .group .icons { display: flex; height: 58px; }
    .icons span { width: 64.6px; display: flex; justify-content: center; }
    .glabel { display: flex; align-items: center; gap: 5px; font-size: 15.5px; letter-spacing: -.55px; height: 28px; white-space: nowrap; }
    .sep { width: 2px; height: 76px; background: #dedede; margin-top: 5px; }
    .g-create { width: 399px; } .g-modify { width: 273px; } .g-constraints { width: 789px; padding-left: 2px; }
    .g-create .glabel { padding-right: 2px; } .g-modify .glabel { padding-right: 5px; } .g-constraints .glabel { padding-right: 8px; }
    .g-inspect { width: 116px; } .g-insert { width: 102px; } .g-select { width: 110px; }
    .g-finish { width: 154px; margin: -2px 0 0 6px; padding-top: 2px; background: #cbe9f5; }
    .edge { height: 5px; background: #eee; border-top: 1px solid #b0b0b0; border-bottom: 1px solid #707070; }

    .canvas { position: relative; height: 1238px; background: #fff; overflow: hidden; }
    .drawing { font-family: "Liberation Sans", Arial, sans-serif; }
    .axis { font-size: 23px; fill: #777; }
    .dim { fill: none; stroke: #1c1c1c; stroke-width: 1.8; }
    .dimtext { font-size: 24px; fill: #3a3a3a; }
    .fab { font-size: 233.400px; font-weight: bold; fill: #6bbfe7; }

    .browser { position: absolute; left: 8px; top: 6px; }
    .bar { width: 450px; height: 37px; border: 1px solid #c2c2c2; border-width: 1px 2px 2px 1px; background: #f1f1f1; display: flex; align-items: center; padding: 1px 1px 0 7px; font-size: 16px; letter-spacing: -.8px; color: #6a6a6a; }
    .bar .lab { margin-left: 15px; flex: 1; }
    .bar .ic + .ic { margin-left: 10px; }
    .tree { padding-top: 5px; font-size: 16px; }
    .node { display: flex; height: 36px; align-items: center; }
    .node .arr { width: 29px; display: flex; }
    .l0 { padding-left: 25px; } .l1 { padding-left: 52px; } .l2 { padding-left: 79px; }
    .chip { height: 30px; background: #f1f1f1; display: flex; align-items: center; padding-left: 4px; }
    .chip .ic { margin-right: 12px; }
    .chip .txt { margin-left: 8.500px; white-space: nowrap; padding-top: 1px; }
    .root { width: 222px; }
    .root .ic { margin-right: 8px; }
    .unsaved { width: 147px; height: 24px; background: #989898; color: #fff; font-weight: bold; display: flex; align-items: center; padding-left: 4px; margin-right: 6px; letter-spacing: .15px; }
    .unsaved .ic { margin-right: 21px; }
    .comments { position: absolute; left: 8px; top: 1194px; }
    .comments .bar { border-top: 0; padding-left: 37px; padding-top: 2px; }
    .comments .bar .lab { margin-left: 0; }

    .navbar { position: absolute; left: 1104px; top: 1196px; height: 36px; width: 356px; background: #f1f1f1; display: flex; align-items: center; padding-left: 4px; }
    .nav { display: flex; align-items: center; }

    .cubebox { position: absolute; left: 2414px; top: 30px; width: 130px; height: 130px; font-family: Roboto, sans-serif; }
    .cubeface { position: absolute; left: 14px; top: 26px; width: 80px; height: 79px; border: 2px solid #a8a8a8; background: rgba(236,236,236,.85); box-shadow: 0 3px 14px rgba(0,0,0,.16); display: flex; align-items: center; justify-content: center; }
    .cubeface span { width: 50px; height: 50px; background: #e5e7e9; display: flex; align-items: center; justify-content: center; font-size: 22px; font-weight: bold; color: #9ba0a4; }
    .cubeface b { transform: translateY(1px) scaleX(.82); }
    .ax { position: absolute; font-size: 23px; line-height: 23px; font-weight: 500; }
    .ay { left: 14px; top: 4px; color: #85f585; } .axx { left: 98px; top: 88px; color: #ff8282; } .az { left: 3px; top: 99px; color: #8080fa; }
    .adot { position: absolute; left: 94px; top: 98px; width: 4px; height: 3px; background: #ff7272; }

    .palette { position: absolute; left: 2181px; top: 186px; width: 375px; height: 636px; background: #f1f1f1; border: 1px solid #c4c4c4; border-right-width: 2px; border-bottom-width: 2px; font-size: 16px; }
    .phead { height: 36px; border-bottom: 2px solid #c9c9c9; display: flex; align-items: center; padding: 1px 6px 0 2px; letter-spacing: -.85px; color: #6a6a6a; }
    .phead .lab { flex: 1; margin-left: 6px; }
    .phead .ic + .ic { margin-left: 10px; }
    .opt { height: 47px; margin-bottom: -2px; display: flex; align-items: center; gap: 8px; padding-left: 14px; font-weight: bold; letter-spacing: .2px; }
    .prow { height: 45px; display: grid; grid-template-columns: 227px 1fr; align-items: center; padding-left: 19px; letter-spacing: .07px; }
    .pair { display: flex; gap: 19px; }
    .check { display: flex; width: 21px; height: 20px; margin-left: 2px; border: 2px solid #5d5d5d; border-radius: 5px; background: linear-gradient(#f2f2f2, #bdbdbd); }
    .check.on { background: linear-gradient(#b0b0b0, #dcdcdc); }
    .check .ic { margin: -2px; }
    .pfoot { height: 55px; border-top: 2px solid #c9c9c9; margin-top: 2px; display: flex; justify-content: flex-end; align-items: center; padding-right: 16px; }
    .fbtn { width: 123px; height: 30px; border: 2px solid #c0c0c0; background: #e9e9e9; color: #777; font-size: 18px; display: flex; align-items: center; justify-content: center; white-space: nowrap; }

    .timeline { height: 68px; background: #f1f1f1; border-top: 2px solid #dcdcdc; display: flex; align-items: center; padding: 4px 16px 0 19px; }
    .timeline .play { display: flex; gap: 18.500px; align-items: center; }
    .timeline .feat { margin-left: 33px; flex: 1; padding-top: 3px; }

    .taskbar { height: 72px; border-top: 2px solid #465054; background: linear-gradient(90deg, #232423 0, #202424 16%, #172a2e 24%, #142a2f 40%, #162a2f 100%); display: flex; align-items: center; font-family: "Open Sans", "Noto Sans", sans-serif; color: #fff; font-size: 17px; }
    .weather { width: 462px; padding: 0 0 2px 28px; display: flex; align-items: center; gap: 11px; line-height: 24px; }
    .weather .sub { color: #c9c9c9; letter-spacing: .15px; }
    .search { margin-left: 21px; width: 329px; height: 48px; border-radius: 24px; background: linear-gradient(90deg, #383b3b, #2e4448); display: flex; align-items: center; padding: 0 6px 0 18px; font-size: 19px; color: #d0d4d5; }
    .search .lab { margin-left: 15px; flex: 1; }
    .apps { display: flex; margin-left: 3px; height: 70px; }
    .app { width: 66px; display: flex; flex-direction: column; align-items: center; padding-top: 15px; }
    .app .ic { overflow: visible; }
    .app i { display: block; margin-top: 5px; width: 9px; height: 5px; border-radius: 3px; background: #939b9d; }
    .app.active { background: linear-gradient(#24373c, #24373c) center 4px / 59px 60px no-repeat; }
    .app.active i { width: 24px; background: #f4775c; }
    .glyph { font-family: "Open Sans", sans-serif; font-weight: bold; fill: #fff; }
    .tray { display: flex; align-items: center; margin-left: 34px; }
    .cl { display: flex; gap: 22px; margin-left: 26px; align-items: center; }
    .lang { width: 60px; text-align: center; line-height: 23px; margin-left: 15px; }
    .conn { display: flex; gap: 11px; align-items: center; margin-left: 13px; }
    .clock { width: 104px; text-align: right; line-height: 23.300px; letter-spacing: -.2px; white-space: nowrap; padding-bottom: 1px; }
  `;

  private group(cls: string, tools: unknown[], label: string) {
    return html`<div class="group ${cls}">
      <div class="icons">${tools.map((t) => html`<span>${tool(t)}</span>`)}</div>
      <div class="glabel">${label}${caret()}</div>
    </div>`;
  }

  private titleBar() {
    return html`<div class="titlebar">
      ${icon(21, 24, svg`<path d="M0 1L4 0V20H0Z" fill="#ff9340"/><path d="M3 0H18L21 3V18H1Z" fill="#ff6a00"/><path d="M2 17H21V24H2Z" fill="#8e3b00"/><text class="glyph" x="11.500" y="14" text-anchor="middle" font-size="12">F</text><text class="glyph" x="11.500" y="23" text-anchor="middle" font-size="6">360</text>`)}
      <span class="name">Autodesk Fusion 360 (Education License)</span>
      <div class="winbtns">
        ${icon(15, 16, svg`<path d="M0 8H15" stroke="#000" stroke-width="1.500"/>`)}
        ${icon(15, 16, svg`<rect x="0.800" y="1" width="13.500" height="13.500" rx="1.500" stroke="#000" stroke-width="1.500"/>`)}
        ${icon(16, 16, svg`<path d="M0.500 0.500L15 15M15 0.500L0.500 15" stroke="#000" stroke-width="1.400"/>`)}
      </div>
    </div>`;
  }

  private tabBar() {
    return html`<div class="tabbar">
      <div class="quick">
        ${icon(22, 22, svg`<path d="M0 0H6V6H0ZM8 0H14V6H8ZM16 0H22V6H16ZM0 8H6V14H0ZM8 8H14V14H8ZM16 8H22V14H16ZM0 16H6V22H0ZM8 16H14V22H8ZM16 16H22V22H16Z" fill="#666"/>`)}
        ${icon(67, 24, svg`<path d="M28 0H41V8H48V24H28ZM43 0L48 6H43Z" fill="#666"/><path d="M57 8H67L62 15.500Z" fill="#666"/>`)}
        ${icon(50, 22, svg`<path d="M28 0H47L50 3V22H31L28 19Z" fill="#666"/><path d="M33 1H45V9H33ZM34 14H44V21H34Z" fill="#ccc"/><path d="M40 2H43V8H40ZM36 16H39V21H36Z" fill="#666"/>`)}
        ${icon(68, 22, svg`<path d="M37 1L30 8L37 15M30 8C42 6 47 12 46 21" stroke="#666" stroke-width="3"/><path d="M58 6H68L63 14Z" fill="#666"/>`)}
        ${icon(59, 22, svg`<path d="M31 1L38 8L31 15M38 8C26 6 21 12 22 21" stroke="#929292" stroke-width="3"/><path d="M49 6H59L54 14Z" fill="#929292"/>`)}
      </div>
      <div class="home">${icon(22, 20, svg`<path d="M11 0L22 11H19V20H13V13H9V20H3V11H0ZM15 1H18V5H15Z" fill="#757575"/>`)}</div>
      <div class="doc">
        <span class="mid">${icon(22, 24, svg`<path d="M1 7L11 1L21 6V18L12 23L1 18Z" fill="#f47a20"/><path d="M1 7L11 1L21 6L12 11Z" fill="#ffb06c"/><path d="M12 11L21 6V18L12 23Z" fill="#dd6310"/>`)}Untitled*</span>
        <span class="x">${icon(13, 13, svg`<path d="M0.500 0.500L12.500 12.500M12.500 0.500L0.500 12.500" stroke="#777" stroke-width="2"/>`)}</span>
      </div>
      <div class="plus">${icon(20, 20, svg`<path d="M10 0V20M0 10H20" stroke="#777" stroke-width="4"/>`)}</div>
      <div class="account">
        ${icon(24, 24, svg`<circle cx="12" cy="12" r="11.800" fill="#666"/><path d="M4 19C2 12 6 5 10 3L13 2M7 15C6 11 8 9 11 10L15 5M13 12L19 6M8 16C11 18 15 16 16 13" stroke="#ccc" stroke-width="2.500"/>`)}
        ${icon(24, 24, svg`<circle cx="12" cy="12" r="10.800" stroke="#666" stroke-width="1.800"/><circle cx="12" cy="12" r="8.500" fill="#666"/><path d="M12 6V13H17" stroke="#ccc" stroke-width="2"/>`)}
        ${icon(24, 25, svg`<path d="M2 20C6 16 5 10 6.500 6Q8 3 11 2.500Q12 0 13 2.500Q17 3 18 7C19 12 18 16 22 20Z" fill="#666"/><path d="M9 22H15L12 25Z" fill="#666"/><circle cx="18" cy="6" r="5" fill="#0c96dc"/>`)}
        ${icon(24, 24, svg`<circle cx="12" cy="12" r="12" fill="#666"/><path d="M8 9Q8.500 5 12 5Q16 5 16 8.500Q16 10.500 13.500 12Q12 13 12 15M12 17V20" stroke="#ccc" stroke-width="2.600"/>`)}
        ${icon(36, 36, svg`<defs><linearGradient id="av" x1="0" y1="0" x2="0" y2="1"><stop offset="0" stop-color="#93a8c6"/><stop offset="1" stop-color="#b6c3d8"/></linearGradient><clipPath id="avc"><circle cx="18" cy="18" r="18"/></clipPath></defs><circle cx="18" cy="18" r="18" fill="url(#av)"/><path clip-path="url(#avc)" d="M9 8Q10 2 18 1Q26 2 27 8V15Q26 21 22 23V27L31 31Q25 36 18 36Q11 36 5 31L14 27V23Q10 21 9 15Z" fill="#4f617c"/>`)}
      </div>
    </div>`;
  }

  private ribbon() {
    return html`<div class="ribbon">
        <div class="design">DESIGN${caret()}</div>
        <div>
          <div class="tabs">
            <span>SOLID</span><span>SURFACE</span><span>MESH</span><span>SHEET METAL</span><span>PLASTIC</span><span>UTILITIES</span><span class="sel">SKETCH</span>
          </div>
          <div class="groups">
            ${this.group("g-create", createTools, "CREATE")}<div class="sep"></div>
            ${this.group("g-modify", modifyTools, "MODIFY")}<div class="sep"></div>
            ${this.group("g-constraints", constraintTools, "CONSTRAINTS")}<div class="sep"></div>
            ${this.group("g-inspect", [inspectTool], "INSPECT")}<div class="sep"></div>
            ${this.group("g-insert", [insertTool], "INSERT")}<div class="sep"></div>
            ${this.group("g-select", [selectTool], "SELECT")}
            ${this.group("g-finish", [finishTool], "FINISH SKETCH")}
          </div>
        </div>
      </div>
      <div class="edge"></div>`;
  }

  private browser() {
    return html`<div class="browser">
      <div class="bar">${icon(15, 10, svg`<path d="M0 5L7.500 0V10ZM7.500 5L15 0V10Z" fill="#2e2e2e"/>`)}<span class="lab">BROWSER</span>${roundBtn(false)}${grip}</div>
      <div class="tree">
        <div class="node l0"><span class="arr">${openArrow}</span>
          <div class="chip root">${solid}<span class="unsaved">${cube}(Unsaved)</span>${icon(20, 20, svg`<circle cx="10" cy="10" r="9" stroke="#333" stroke-width="1.800"/><circle cx="10" cy="10" r="4" fill="#222"/>`)}</div>
        </div>
        ${rows.map((r) => html`<div class="node l${r.lvl}"><span class="arr">${r.arrow ?? ""}</span>
          <div class="chip" style="width:${r.w}px">${r.icons}<span class="txt">${r.label}</span></div></div>`)}
      </div>
    </div>`;
  }

  private palette() {
    return html`<div class="palette">
      <div class="phead">${gripR}${roundBtn(false)}<span class="lab">SKETCH PALETTE</span>${icon(15, 10, svg`<path d="M0 0L7.500 5L0 10ZM7.500 0L15 5L7.500 10Z" fill="#2e2e2e"/>`)}</div>
      <div class="opt">${icon(14, 10, svg`<path d="M0.500 0.500H13.500L7 9Z" fill="#2e2e2e"/>`)}Options</div>
      ${options.map(([l, c]) => html`<div class="prow"><span>${l}</span><span>${c}</span></div>`)}
      <div class="pfoot"><span class="fbtn">Finish Sketch</span></div>
    </div>`;
  }

  private timeline() {
    return html`<div class="timeline">
      <div class="play">
        ${icon(18, 22, svg`<path d="M1 1V21" stroke="#4c4c4c" stroke-width="2"/><path d="M3 11L18 1V21Z" fill="#4c4c4c"/>`)}
        ${icon(20, 22, svg`<path d="M0 11L14 1V21Z" fill="#4c4c4c"/><path d="M18 6V16" stroke="#4c4c4c" stroke-width="2"/>`)}
        ${icon(18, 24, svg`<path d="M0 0L18 12L0 24Z" fill="#4c4c4c"/>`)}
        ${icon(20, 22, svg`<path d="M20 11L6 1V21Z" fill="#4c4c4c"/><path d="M2 6V16" stroke="#4c4c4c" stroke-width="2"/>`)}
        ${icon(18, 22, svg`<path d="M17 1V21" stroke="#4c4c4c" stroke-width="2"/><path d="M15 11L0 1V21Z" fill="#4c4c4c"/>`)}
      </div>
      <div class="feat">${icon(42, 50, svg`<rect x="3" y="12" width="19" height="19" stroke="#666" stroke-width="1.600"/>${sq(3, 11, BLUE, 4)}${sq(22, 11, BLUE, 4)}${sq(3, 31, BLUE, 4)}<path d="M14 32L22 23" stroke="#f6bd3a" stroke-width="4.500"/><circle cx="23" cy="23" r="3" fill="#f0484a"/><path d="M15 38V49" stroke="#c8c8c8" stroke-width="2"/><path d="M22 1H40V8L34 14H28L22 8Z" fill="#666"/><path d="M31 12V49" stroke="#555" stroke-width="2.200"/>`)}</div>
      ${gear("#979797")}
    </div>`;
  }

  private taskbar() {
    return html`<div class="taskbar">
      <div class="weather">
        ${icon(37, 34, svg`<path d="M22 3C31 8 36 18 31 27C25 36 8 35 4 26C15 27 24 18 22 3Z" fill="#f59d2a"/><path d="M6 14Q0 14 1 10Q2 7 5 7Q7 1 12 2Q15 3 16 6Q21 7 20 11Q19 14 16 14Z" fill="#b5cdf5"/><path d="M19 32Q14 31 15 27Q16 25 19 25Q21 19 26 20Q30 21 30 24Q36 25 35 29Q34 32 31 32Z" fill="#b5cdf5"/>`)}
        <div><div>28°C</div><div class="sub">Partly cloudy</div></div>
      </div>
      ${icon(36, 36, svg`<defs><linearGradient id="wn" gradientUnits="userSpaceOnUse" x1="0" y1="0" x2="36" y2="36"><stop offset="0" stop-color="#7ce8fc"/><stop offset="1" stop-color="#0a91f8"/></linearGradient></defs><path d="M1 1H17.300V17.300H1ZM18.700 1H35V17.300H18.700ZM1 18.700H17.300V35H1ZM18.700 18.700H35V35H18.700Z" fill="url(#wn)"/>`)}
      <div class="search">
        ${icon(22, 22, svg`<circle cx="9.500" cy="9.500" r="8" stroke="#e8e8e8" stroke-width="2.200" fill="#5a6163"/><path d="M15 15L21 21" stroke="#e8e8e8" stroke-width="2.800"/>`)}
        <span class="lab">Search</span>
        ${icon(80, 40, svg`<path d="M2 36L14 25H68L78 36V39H2Z" fill="#e9bd93"/><path d="M15 15L26 12L40 11L42 29L30 30L19 33Z" fill="#f7f7f4" stroke="#4a7f4a" stroke-width="1"/><path d="M18 35L43 31V28L18 32Z" fill="#3d9c4c"/><path d="M27 12L30 30M19 19L26 17M30 16L38 15M20 24L27 22M31 20L39 19" stroke="#8d96a0"/><path d="M36 19L44 5L47 7L39 21Z" fill="#f7b52e"/><circle cx="45.500" cy="5" r="2.500" fill="#f0503c"/><path d="M53 34V13Q53 3 63 3Q74 3 74 13V34Q74 36 63 36Q53 36 53 34Z" fill="#1a86f5"/><path d="M56 15Q63 11 71 15M55 28Q55 21 63 21Q72 21 72 28V32H55Z" stroke="#58b6ff" stroke-width="1.500" fill="#0c5fd6"/><path d="M9 3L11 7L14 8L11 10L9 13L7 10L4 8L7 7Z" fill="#d572ee"/><circle cx="76" cy="7" r="2" fill="#fbae17"/><circle cx="47" cy="19" r="2" fill="#3fb9bd"/>`)}
      </div>
      <div class="apps">${apps.map((a) => html`<div class="app ${a.mark === "bar" ? "active" : ""}">${a.body}${a.mark ? html`<i></i>` : ""}</div>`)}</div>
      <div class="tray">
        ${icon(17, 10, svg`<path d="M1 9L8.500 1.500L16 9" stroke="#fff" stroke-width="1.900"/>`)}
        <div class="cl">${cloud("#8f9699", "#fff")}${cloud("#0c64ba", "#27a0ee")}
          ${icon(26, 26, svg`<path d="M2 12C2 -2 20 -3 23 8M23 2V8H17M3 24V17H8M3 18C5 22 8 24 11 24" stroke="#dfe3e4" stroke-width="1.700"/><circle cx="18" cy="18.500" r="6.500" fill="#ffa109"/>`)}</div>
        <div class="lang">ENG<br />US</div>
        <div class="conn">
          ${icon(26, 20, svg`<path d="M1.500 8C8 0 18 0 24.500 8M5 12C9.500 6.500 16.500 6.500 21 12M9 15.500C11.500 12.500 14.500 12.500 17 15.500" stroke="#fff" stroke-width="1.800"/><circle cx="13" cy="18" r="2" fill="#fff"/>`)}
          ${icon(24, 20, svg`<path d="M1 7H5L10 2V18L5 13H1Z" stroke="#fff" stroke-width="1.600"/><path d="M13 7Q15 10 13 13M16 4Q20 10 16 16" stroke="#fff" stroke-width="1.600"/><path d="M19.500 2Q25 10 19.500 18" stroke="#7e888a" stroke-width="1.600"/>`)}
          ${icon(26, 20, svg`<path d="M8 5H19Q22 5 22 8V15Q22 18 19 18H5Q2 18 2 15V11" stroke="#fff" stroke-width="1.700"/><path d="M23 9H25V14H23Z" fill="#fff"/><path d="M9 8H19V15H5V13Z" fill="#fff"/><path d="M5 0L1 8H4L2 13L8 5H5L7 0Z" fill="#fff"/>`)}
        </div>
        <div class="clock">11:07 pm<br />20/5/2023</div>
      </div>
    </div>`;
  }

  render() {
    return html`<div class="window">
      ${this.titleBar()}${this.tabBar()}${this.ribbon()}
      <div class="canvas">
        ${drawing()}
        ${this.browser()}
        <div class="comments"><div class="bar"><span class="lab">COMMENTS</span>${roundBtn(true)}${grip}</div></div>
        <div class="navbar">${navItems.map((n) => html`<div class="nav" style="margin-left:${n.lead}px;gap:${n.gap ?? 0}px">${n.body}${n.gap ? caret() : ""}</div>`)}</div>
        <div class="cubebox">
          <div class="cubeface"><span><b>TOP</b></span></div>
          <span class="ax ay">Y</span><span class="adot"></span><span class="ax axx">X</span><span class="ax az">Z</span>
        </div>
        ${this.palette()}
      </div>
      ${this.timeline()}${this.taskbar()}
    </div>`;
  }
}
